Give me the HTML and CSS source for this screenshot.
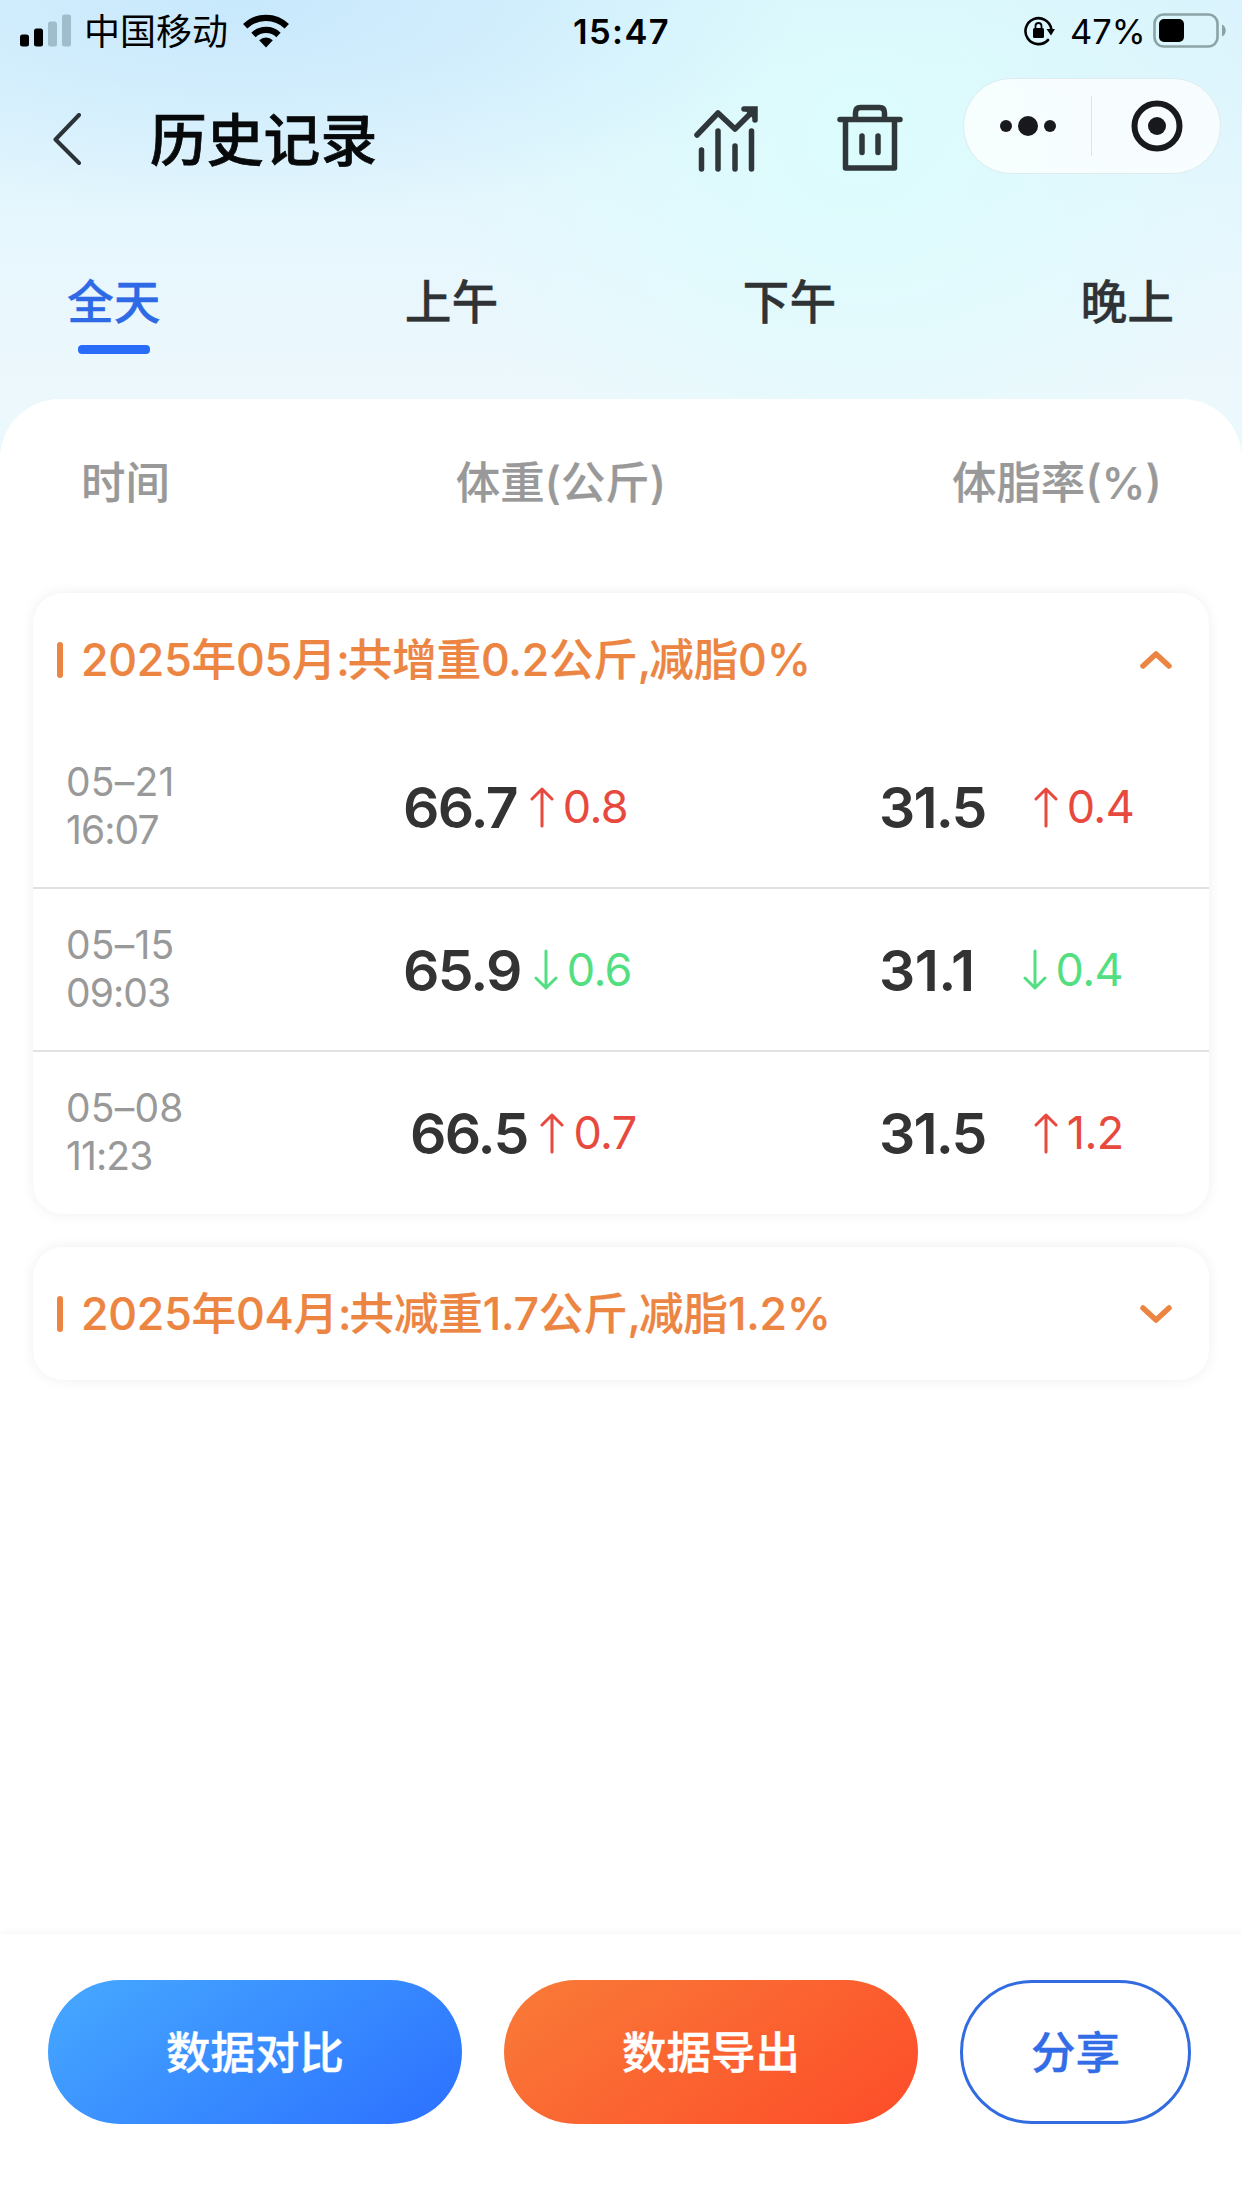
FILE: index.html
```html
<!DOCTYPE html>
<html lang="zh-CN">
<head>
<meta charset="utf-8">
<title>历史记录</title>
<link rel="stylesheet" href="styles.css">
</head>
<body>
<div class="screen">
  <header class="status">
    <svg class="signal" width="52" height="34" viewBox="0 0 52 34"><rect x="0" y="20.500" width="9" height="12" rx="2.500"/><rect x="14" y="14.500" width="9" height="18" rx="2.500"/><g fill="#9fbdcb"><rect x="28" y="7.500" width="9" height="25" rx="2.500"/><rect x="42" y="0.500" width="9" height="32" rx="2.500"/></g></svg>
    <span class="carrier">中国移动</span>
    <svg class="wifi" width="46" height="34" viewBox="0 0 46 34"><g fill="none" stroke="#000" stroke-width="6.200"><path d="M2.200 12.200a30 30 0 0 1 41.600 0"/><path d="M10.500 21a18 18 0 0 1 25 0"/></g><path d="M23 33.500l-6.800-7.300a10 10 0 0 1 13.600 0z"/></svg>
    <span class="clock">15:47</span>
    <svg class="lock" width="32" height="32" viewBox="0 0 32 32"><path d="M25 25A13 13 0 1 1 28.300 14" fill="none" stroke="#000" stroke-width="2.600" stroke-linecap="round"/><path d="M23.500 14h8.500l-4 6.500z"/><rect x="10" y="13" width="11" height="10" rx="1.500"/><path d="M12.500 14v-3a3 3 0 0 1 6 0v3" fill="none" stroke="#000" stroke-width="1.800"/></svg>
    <span class="percent">47%</span>
    <svg class="battery" width="75" height="36" viewBox="0 0 75 36"><rect x="1.500" y="1.500" width="63" height="32" rx="9" fill="none" stroke="#8ca3a5" stroke-width="2.600"/><rect x="6" y="6" width="25" height="23" rx="5"/><path d="M69 11.500c5 2 5 10 0 12z" fill="#8ca3a5"/></svg>
  </header>

  <nav class="navbar">
    <svg class="back" width="30" height="54" viewBox="0 0 30 54"><path d="M26 2L2.500 26.500 26 50" fill="none" stroke="#2b3338" stroke-width="4" stroke-linecap="round" stroke-linejoin="round"/></svg>
    <h1 class="title">历史记录</h1>
    <svg class="chart" width="68" height="68" viewBox="0 0 68 68" fill="none" stroke="#2f373a" stroke-width="5.500" stroke-linecap="round" stroke-linejoin="round"><path d="M5 31L26 9l17 16L61 7"/><path d="M52 5h11v11" stroke-linejoin="miter"/><path d="M62 6l-7 1 6 6z" fill="#2f373a" stroke-width="2"/><path d="M9.500 46v19M26 27v38M43 42v23M59.500 27v38"/></svg>
    <svg class="trash" width="66" height="68" viewBox="0 0 66 68" fill="none" stroke="#2f373a" stroke-width="5.500" stroke-linecap="round" stroke-linejoin="round"><path d="M3 15.500h60M18.500 14.500V9q0-5.500 5-5.500h19q5 0 5 5.500v5.500M8.500 16v48h49V16"/><path d="M25 32v16.500M41 32v16.500"/></svg>
    <div class="capsule">
      <svg width="60" height="24" viewBox="0 0 60 24"><circle cx="7" cy="12" r="6"/><circle cx="29" cy="12" r="10"/><circle cx="51" cy="12" r="6"/></svg>
      <i class="capsule-line"></i>
      <svg width="54" height="54" viewBox="0 0 54 54"><circle cx="27" cy="27" r="22.500" fill="none" stroke="#17191c" stroke-width="6"/><circle cx="27" cy="27" r="9"/></svg>
    </div>
  </nav>

  <div class="tabs">
    <span class="tab active">全天</span><span class="tab">上午</span><span class="tab">下午</span><span class="tab">晚上</span>
  </div>

  <main class="panel">
    <div class="columns"><span>时间</span><span>体重(公斤)</span><span>体脂率(%)</span></div>

    <section class="card">
      <div class="month"><i class="mark"></i><span class="summary">2025年05月<span class="punct">:</span>共增重0.2公斤<span class="punct">,</span>减脂0%</span>
        <svg width="34" height="22" viewBox="0 0 34 22"><path d="M4 17L17 5l13 12"/></svg></div>
      <div class="row">
        <div class="date">05–21<br><span class="time">16:07</span></div>
        <div class="weight"><b>66.7</b><span class="delta up"><svg width="24" height="42" viewBox="0 0 24 42"><path d="M12 40V3M2 13L12 3l10 10"/></svg>0.8</span></div>
        <div class="fat"><b>31.5</b><span class="delta up"><svg width="24" height="42" viewBox="0 0 24 42"><path d="M12 40V3M2 13L12 3l10 10"/></svg>0.4</span></div>
      </div>
      <div class="row">
        <div class="date">05–15<br><span class="time">09:03</span></div>
        <div class="weight"><b>65.9</b><span class="delta down"><svg width="24" height="42" viewBox="0 0 24 42"><path d="M12 2v37M2 29l10 10 10-10"/></svg>0.6</span></div>
        <div class="fat"><b class="narrow">31.1</b><span class="delta down"><svg width="24" height="42" viewBox="0 0 24 42"><path d="M12 2v37M2 29l10 10 10-10"/></svg>0.4</span></div>
      </div>
      <div class="row last">
        <div class="date">05–08<br><span class="time">11:23</span></div>
        <div class="weight"><b>66.5</b><span class="delta up"><svg width="24" height="42" viewBox="0 0 24 42"><path d="M12 40V3M2 13L12 3l10 10"/></svg>0.7</span></div>
        <div class="fat"><b>31.5</b><span class="delta up"><svg width="24" height="42" viewBox="0 0 24 42"><path d="M12 40V3M2 13L12 3l10 10"/></svg>1.2</span></div>
      </div>
    </section>

    <section class="card">
      <div class="month"><i class="mark"></i><span class="summary">2025年04月<span class="punct">:</span>共减重1.7公斤<span class="punct">,</span>减脂1.2%</span>
        <svg width="34" height="22" viewBox="0 0 34 22"><path d="M4 5l13 12L30 5"/></svg></div>
    </section>
  </main>

  <footer class="actions">
    <button class="btn compare">数据对比</button>
    <button class="btn export">数据导出</button>
    <button class="btn share">分享</button>
  </footer>
</div>
</body>
</html>
```
FILE: styles.css
```css
* { box-sizing: border-box; }
body { margin: 0; }
svg { display: block; flex: none; }

.screen {
  width: 1242px;
  height: 2208px;
  display: flex;
  flex-direction: column;
  overflow: hidden;
  font-family: Inter, "Noto Sans CJK SC", sans-serif;
  color: #2f3335;
  background:
    radial-gradient(ellipse 560px 220px at 240px 0, #c8e8fc 0, rgba(200, 232, 252, 0) 100%),
    radial-gradient(ellipse 420px 400px at 860px 130px, #dcfcfc 0, rgba(220, 252, 252, 0) 100%),
    linear-gradient(180deg, #daf3fd 0, #e7f7fd 250px, #edf8fc 399px, #e8f9fe 480px);
}

/* Status bar */
.status { height: 62px; flex: none; display: flex; align-items: center; padding: 0 0 0 20px; color: #000; }
.carrier { margin-left: 12px; padding-top: 2px; font-size: 36px; line-height: 60px; width: 147px; }
.wifi { margin-left: 12px; }
.clock { margin-left: 284px; width: 102px; font-size: 34.500px; font-weight: 600; letter-spacing: 1.4px; }
.lock { margin-left: 348px; }
.percent { margin-left: 15px; width: 78px; font-size: 34.500px; white-space: nowrap; }
.battery { margin-left: 5px; }

/* Title bar */
.navbar { height: 158px; flex: none; display: flex; align-items: flex-start; padding: 16px 0 0 53px; }
.back { margin-top: 35px; }
.title {
  margin: 23px 0 0 67px;
  width: 228px;
  font-size: 56.800px;
  line-height: 80px;
  font-weight: 500;
  color: #07090a;
  -webkit-text-stroke: 0.7px;
  white-space: nowrap;
}
.chart { margin: 26px 0 0 314px; }
.trash { margin: 26px 0 0 77px; }
.capsule {
  margin: 0 0 0 60px;
  width: 258px;
  height: 96px;
  flex: none;
  display: flex;
  align-items: center;
  padding-left: 35px;
  border: 1px solid #dcecef;
  border-radius: 48px;
  background: rgba(255, 255, 255, 0.75);
  fill: #17191c;
}
.capsule-line { width: 1px; height: 60px; margin: 0 38px 0 32px; background: #dce5e8; }

/* Period tabs */
.tabs { height: 179px; flex: none; display: flex; justify-content: space-between; padding: 48px 68px 0 67px; }
.tab { font-size: 46.800px; line-height: 68px; font-weight: 500; -webkit-text-stroke: 0.3px; }
.active { display: flex; flex-direction: column; align-items: center; color: #2e6ae6; }
.active::after { content: ""; width: 72px; height: 9px; margin-top: 9px; border-radius: 4px; background: #2a6cfa; }

/* Record list */
.panel { flex: 1; padding: 0 33px; border-radius: 60px 60px 0 0; background: #fff; }
.columns {
  height: 194px;
  display: flex;
  justify-content: space-between;
  padding: 52px 47px 0 48px;
  font-size: 44.400px;
  line-height: 64px;
  font-weight: 500;
  color: #999;
  -webkit-text-stroke: 0.2px;
}
.card { margin-bottom: 33px; border-radius: 30px; background: #fff; box-shadow: 0 0 14px rgba(0, 0, 0, 0.065); }
.month { height: 133px; display: flex; align-items: center; padding: 0 36px 0 24px; color: #ec8442; }
.month svg { margin-left: auto; fill: none; stroke: #ec8442; stroke-width: 5.5; stroke-linecap: round; stroke-linejoin: round; }
.mark { width: 6px; height: 36px; border-radius: 3px; background: #ec8442; }
.summary {
  margin-left: 18px;
  font-size: 44.600px;
  line-height: 64px;
  font-weight: 500;
  letter-spacing: -0.2px;
  white-space: nowrap;
  -webkit-text-stroke: 0.2px;
}
.punct { letter-spacing: -2px; }
.row { height: 163px; display: grid; grid-template-columns: 336px 476px 1fr; align-items: center; border-bottom: 2px solid #e2e2e2; }
.row.last { height: 162px; border-bottom: 0; }
.date { padding: 0 0 2px 33px; font-size: 39px; line-height: 48px; letter-spacing: 0.2px; color: #999; }
.time { letter-spacing: -0.9px; }
.weight, .fat { display: flex; align-items: center; padding-left: 34px; }
.last .weight { padding-left: 41px; }
.row b { padding-top: 2px; font-size: 57px; line-height: 68px; font-weight: 600; letter-spacing: -1.800px; color: #333; }
.row .narrow { letter-spacing: -0.5px; }
.delta { display: flex; align-items: center; gap: 9px; margin-left: 13px; font-size: 45px; line-height: 54px; letter-spacing: -0.6px; }
.fat .delta { margin-left: 48px; }
.delta svg { fill: none; stroke: currentColor; stroke-width: 3; stroke-linecap: round; stroke-linejoin: round; }
.up { color: #e8493e; }
.down { color: #53df81; }

/* Bottom actions */
.actions {
  height: 274px;
  flex: none;
  display: flex;
  align-items: flex-start;
  gap: 42px;
  padding: 46px 48px 0;
  background: #fff;
  box-shadow: 0 -1px 8px rgba(0, 0, 0, 0.05);
}
.btn {
  width: 414px;
  height: 144px;
  padding: 1px 0 0;
  border: 0;
  border-radius: 72px;
  font: 500 44.500px/64px Inter, "Noto Sans CJK SC", sans-serif;
  color: #fff;
  -webkit-text-stroke: 0.4px;
}
.compare { background: linear-gradient(145deg, #46a9ff, #2c70ff); }
.export { background: linear-gradient(145deg, #f97b38, #fd4c29); }
.share { width: 231px; border: 3px solid #326ce0; background: #fff; color: #326ce6; }
```
